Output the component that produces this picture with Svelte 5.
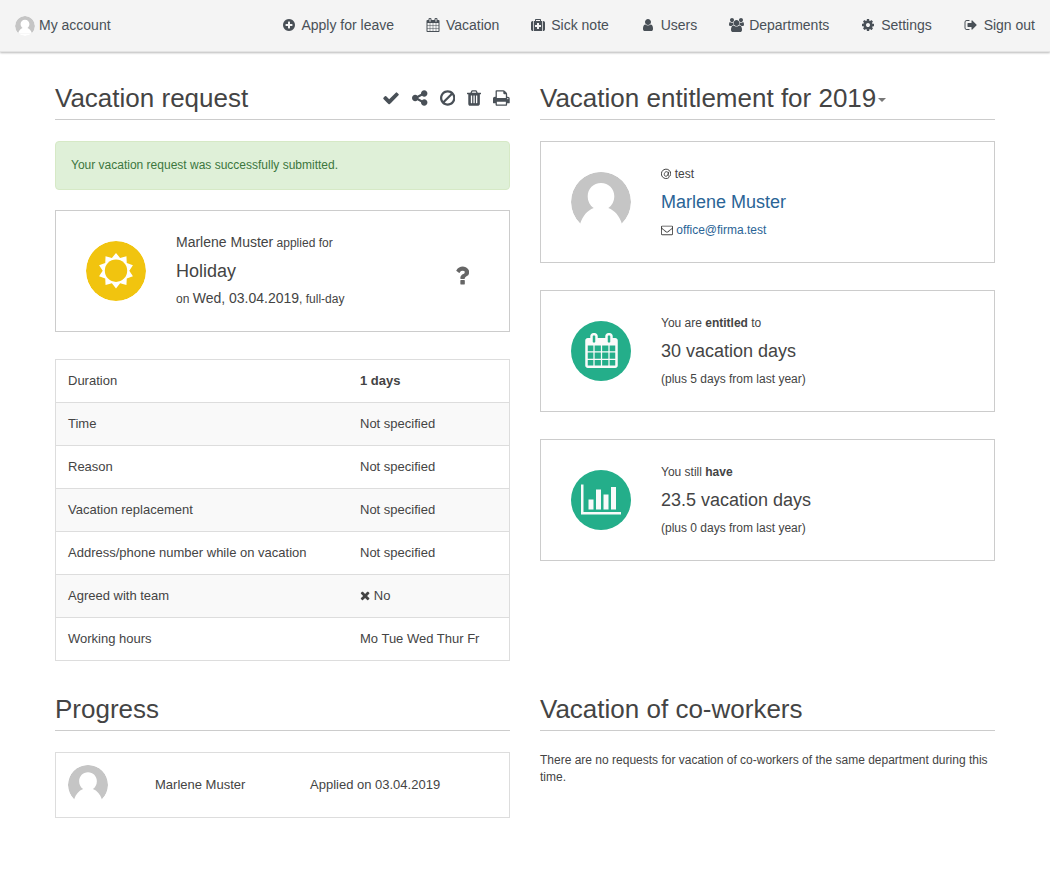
<script>
  const icons = {
    plus: ['0 0 1792 1792', 'M1344 960v-128q0-26-19-45t-45-19h-256v-256q0-26-19-45t-45-19h-128q-26 0-45 19t-19 45v256h-256q-26 0-45 19t-19 45v128q0 26 19 45t45 19h256v256q0 26 19 45t45 19h128q26 0 45-19t19-45v-256h256q26 0 45-19t19-45zm320-64q0 209-103 385.5t-279.5 279.5-385.5 103-385.5-103-279.5-279.5-103-385.5 103-385.5 279.5-279.5 385.5-103 385.5 103 279.5 279.5 103 385.5z'],
    calendar: ['0 0 1792 1792', 'M192 1664h288v-288h-288v288zm352 0h320v-288h-320v288zm-352-352h288v-320h-288v320zm352 0h320v-320h-320v320zm-352-384h288v-288h-288v288zm736 736h320v-288h-320v288zm-384-736h320v-288h-320v288zm768 736h288v-288h-288v288zm-384-352h320v-320h-320v320zm-352-864v-288q0-13-9.5-22.5t-22.5-9.5h-64q-13 0-22.5 9.5t-9.5 22.5v288q0 13 9.5 22.5t22.5 9.5h64q13 0 22.5-9.5t9.5-22.5zm736 864h288v-320h-288v320zm-384-384h320v-288h-320v288zm384 0h288v-288h-288v288zm32-480v-288q0-13-9.5-22.5t-22.5-9.5h-64q-13 0-22.5 9.5t-9.5 22.5v288q0 13 9.5 22.5t22.5 9.5h64q13 0 22.5-9.5t9.5-22.5zm384-64v1280q0 52-38 90t-90 38h-1408q-52 0-90-38t-38-90v-1280q0-52 38-90t90-38h128v-96q0-66 47-113t113-47h64q66 0 113 47t47 113v96h384v-96q0-66 47-113t113-47h64q66 0 113 47t47 113v96h128q52 0 90 38t38 90z'],
    medkit: ['0 0 1792 1792', 'M1280 1120v-192q0-14-9-23t-23-9h-224v-224q0-14-9-23t-23-9h-192q-14 0-23 9t-9 23v224h-224q-14 0-23 9t-9 23v192q0 14 9 23t23 9h224v224q0 14 9 23t23 9h192q14 0 23-9t9-23v-224h224q14 0 23-9t9-23zm-640-736h512v-128h-512v128zm-384 0v1280h-32q-92 0-158-66t-66-158v-832q0-92 66-158t158-66h32zm1184 0v1280h-1088v-1280h160v-160q0-40 28-68t68-28h576q40 0 68 28t28 68v160h160zm352 224v832q0 92-66 158t-158 66h-32v-1280h32q92 0 158 66t66 158z'],
    user: ['0 0 1792 1792', 'M1536 1399q0 109-62.5 187t-150.5 78h-854q-88 0-150.5-78t-62.5-187q0-85 8.5-160.5t31.5-152 58.5-131 94-89 134.5-34.5q131 128 313 128t313-128q76 0 134.5 34.5t94 89 58.5 131 31.5 152 8.5 160.5zm-256-887q0 159-112.5 271.5t-271.5 112.5-271.5-112.5-112.5-271.5 112.5-271.5 271.5-112.5 271.5 112.5 112.5 271.5z'],
    group: ['0 0 1920 1792', 'M593 896q-162 5-265 128h-134q-82 0-138-40.5t-56-118.5q0-353 124-353 6 0 43.5 21t97.5 42.5 119 21.5q67 0 133-23-5 37-5 66 0 139 81 256zm1071 637q0 120-73 189.5t-194 69.5h-874q-121 0-194-69.5t-73-189.5q0-53 3.5-103.5t14-109 26.5-108.5 43-97.5 62-81 85.5-53.5 111.5-20q10 0 43 21.5t73 48 107 48 135 21.5 135-21.5 107-48 73-48 43-21.5q61 0 111.5 20t85.5 53.5 62 81 43 97.5 26.5 108.5 14 109 3.5 103.5zm-1024-1277q0 106-75 181t-181 75-181-75-75-181 75-181 181-75 181 75 75 181zm704 384q0 159-112.5 271.5t-271.5 112.5-271.5-112.5-112.5-271.5 112.5-271.5 271.5-112.5 271.5 112.5 112.5 271.5zm576 225q0 78-56 118.5t-138 40.5h-134q-103-123-265-128 81-117 81-256 0-29-5-66 66 23 133 23 59 0 119-21.5t97.5-42.5 43.5-21q124 0 124 353zm-128-609q0 106-75 181t-181 75-181-75-75-181 75-181 181-75 181 75 75 181z'],
    cog: ['0 0 1792 1792', 'M1152 896q0-106-75-181t-181-75-181 75-75 181 75 181 181 75 181-75 75-181zm512-109v222q0 12-8 23t-20 13l-185 28q-19 54-39 91 35 50 107 138 10 12 10 25t-9 23q-27 37-99 108t-94 71q-12 0-26-9l-138-108q-44 23-91 38-16 136-29 186-7 28-36 28h-222q-14 0-24.5-8.5t-11.5-21.5l-28-184q-49-16-90-37l-141 107q-10 9-25 9-14 0-25-11-126-114-165-168-7-10-7-23 0-12 8-23 15-21 51-66.5t54-70.5q-27-50-41-99l-183-27q-13-2-21-12.5t-8-23.5v-222q0-12 8-23t19-13l186-28q14-46 39-92-40-57-107-138-10-12-10-24 0-10 9-23 26-36 98.5-107.5t94.5-71.5q13 0 26 10l138 107q44-23 91-38 16-136 29-186 7-28 36-28h222q14 0 24.5 8.5t11.5 21.5l28 184q49 16 90 37l142-107q9-9 24-9 13 0 25 10 129 119 165 170 7 8 7 22 0 12-8 23-15 21-51 66.5t-54 70.5q26 50 41 98l183 28q13 2 21 12.5t8 23.5z'],
    signout: ['0 0 1792 1792', 'M704 1440q0 4 1 20t.5 26.5-3 23.5-10 19.5-20.5 6.5h-320q-119 0-203.5-84.5t-84.5-203.5v-704q0-119 84.5-203.5t203.5-84.5h320q13 0 22.5 9.5t9.5 22.5q0 4 1 20t.5 26.5-3 23.5-10 19.5-20.5 6.5h-320q-66 0-113 47t-47 113v704q0 66 47 113t113 47h312l11.5 1 11.5 3 8 5.5 7 9 2 13.5zm928-544q0 26-19 45l-544 544q-19 19-45 19t-45-19-19-45v-288h-448q-26 0-45-19t-19-45v-384q0-26 19-45t45-19h448v-288q0-26 19-45t45-19 45 19l544 544q19 19 19 45z'],
    check: ['0 0 1792 1792', 'M1671 566q0 40-28 68l-724 724-136 136q-28 28-68 28t-68-28l-136-136-362-362q-28-28-28-68t28-68l136-136q28-28 68-28t68 28l294 295 656-657q28-28 68-28t68 28l136 136q28 28 28 68z'],
    share: ['128 0 1536 1792', 'M1344 1024q133 0 226.5 93.5t93.5 226.5-93.5 226.5-226.5 93.5-226.5-93.5-93.5-226.5q0-12 2-34l-360-180q-92 86-218 86-133 0-226.5-93.5t-93.5-226.5 93.5-226.5 226.5-93.5q126 0 218 86l360-180q-2-22-2-34 0-133 93.5-226.5t226.5-93.5 226.5 93.5 93.5 226.5-93.5 226.5-226.5 93.5q-126 0-218-86l-360 180q2 22 2 34t-2 34l360 180q92-86 218-86z'],
    ban: ['128 0 1536 1792', 'M1440 893q0-161-87-295l-754 753q137 89 297 89 111 0 211.5-43.5t173.5-116.5 116-174.5 43-212.5zm-999 299l755-754q-135-91-300-91-148 0-273 73t-198 199-73 274q0 162 89 299zm1223-299q0 157-61 300t-163.5 246-245 164-298.5 61-298.5-61-245-164-163.5-246-61-300 61-299.5 163.5-245.5 245-164 298.5-61 298.5 61 245 164 163.5 245.5 61 299.5z'],
    trash: ['192 0 1408 1792', 'M704 1376v-704q0-14-9-23t-23-9h-64q-14 0-23 9t-9 23v704q0 14 9 23t23 9h64q14 0 23-9t9-23zm256 0v-704q0-14-9-23t-23-9h-64q-14 0-23 9t-9 23v704q0 14 9 23t23 9h64q14 0 23-9t9-23zm256 0v-704q0-14-9-23t-23-9h-64q-14 0-23 9t-9 23v704q0 14 9 23t23 9h64q14 0 23-9t9-23zm-544-992h448l-48-117q-7-9-17-11h-317q-10 2-17 11zm928 32v64q0 14-9 23t-23 9h-96v948q0 83-47 143.5t-113 60.5h-832q-66 0-113-58.5t-47-141.5v-952h-96q-14 0-23-9t-9-23v-64q0-14 9-23t23-9h309l70-167q15-37 54-63t79-26h320q40 0 79 26t54 63l70 167h309q14 0 23 9t9 23z'],
    print: ['64 0 1664 1792', 'M448 1536h896v-256h-896v256zm0-640h896v-384h-160q-40 0-68-28t-28-68v-160h-640v640zm1152 64q0-26-19-45t-45-19-45 19-19 45 19 45 45 19 45-19 19-45zm128 0v416q0 13-9.5 22.5t-22.5 9.5h-224v160q0 40-28 68t-68 28h-960q-40 0-68-28t-28-68v-160h-224q-13 0-22.5-9.5t-9.5-22.5v-416q0-79 56.5-135.5t135.5-56.5h64v-544q0-40 28-68t68-28h672q40 0 88 20t76 48l152 152q28 28 48 76t20 88v256h64q79 0 135.5 56.5t56.5 135.5z'],
    question: ['384 0 1024 1792', 'M1088 1256v240q0 16-12 28t-28 12h-240q-16 0-28-12t-12-28v-240q0-16 12-28t28-12h240q16 0 28 12t12 28zm316-600q0 54-15.5 101t-35 76.5-55 59.5-57.5 43.5-61 35.5q-41 23-68.5 65t-27.5 67q0 17-12 32.5t-28 15.5h-240q-15 0-25.5-18.5t-10.5-37.5v-45q0-83 65-156.5t143-108.5q59-27 84-56t25-76q0-42-46.5-74t-107.5-32q-65 0-108 29-35 25-107 115-13 16-31 16-12 0-25-8l-164-125q-13-10-15.5-25t5.5-28q160-266 464-266 80 0 161 31t146 83 106 127.5 41 158.5z'],
    envelope: ['0 0 1792 1792', 'M1664 1504v-768q-32 36-69 66-268 206-426 338-51 43-83 67t-86.5 48.5-102.5 24.5h-2q-48 0-102.5-24.5t-86.5-48.5-83-67q-158-132-426-338-37-30-69-66v768q0 13 9.5 22.5t22.5 9.5h1472q13 0 22.5-9.5t9.5-22.5zm0-1051v-24.5l-.5-13-3-12.5-5.5-9-9-7.5-14-2.5h-1472q-13 0-22.5 9.5t-9.5 22.5q0 168 147 284 193 152 401 317 6 5 35 29.5t46 37.5 44.5 31.5 50.5 27.5 43 9h2q20 0 43-9t50.5-27.5 44.5-31.5 46-37.5 35-29.5q208-165 401-317 54-43 100.5-115.5t46.5-131.5zm128-37v1088q0 66-47 113t-113 47h-1472q-66 0-113-47t-47-113v-1088q0-66 47-113t113-47h1472q66 0 113 47t47 113z'],
    times: ['192 0 1408 1792', 'M1490 1322q0 40-28 68l-136 136q-28 28-68 28t-68-28l-294-294-294 294q-28 28-68 28t-68-28l-136-136q-28-28-28-68t28-68l294-294-294-294q-28-28-28-68t28-68l136-136q28-28 68-28t68 28l294 294 294-294q28-28 68-28t68 28l136 136q28 28 28 68t-28 68l-294 294 294 294q28 28 28 68z'],
    chart: ['0 0 2048 1792', 'M640 896v512h-256v-512h256zm384-512v1024h-256v-1024h256zm1024 1152v128h-2048v-1536h128v1408h1920zm-640-896v768h-256v-768h256zm384-384v1152h-256v-1152h256z']
  };

  const nav = [
    ['plus', 'Apply for leave'],
    ['calendar', 'Vacation'],
    ['medkit', 'Sick note'],
    ['user', 'Users'],
    ['group', 'Departments'],
    ['cog', 'Settings'],
    ['signout', 'Sign out']
  ];
  const actions = ['check', 'share', 'ban', 'trash', 'print'];
  const details = [
    ['Duration', '1 days'],
    ['Time', 'Not specified'],
    ['Reason', 'Not specified'],
    ['Vacation replacement', 'Not specified'],
    ['Address/phone number while on vacation', 'Not specified'],
    ['Agreed with team', 'No'],
    ['Working hours', 'Mo Tue Wed Thur Fr']
  ];

  // Ten-pointed outline of the sun, alternating tip and valley
  const sun = Array.from({ length: 20 }, (_, i) => {
    const r = i % 2 ? 13.3 : 17.8;
    const a = (i * Math.PI) / 10;
    return `${(30 + r * Math.sin(a)).toFixed(2)},${(29.7 - r * Math.cos(a)).toFixed(2)}`;
  }).join(' ');
</script>

{#snippet icon(name, size)}
  {@const box = icons[name][0].split(' ')}
  <svg class="icon" viewBox={icons[name][0]} width={(box[2] / 1792) * size} height={size} aria-hidden="true"><path d={icons[name][1]} /></svg>
{/snippet}

{#snippet avatar(size)}
  <svg class="avatar" viewBox="0 0 60 60" width={size} height={size} aria-hidden="true">
    <circle cx="30" cy="30" r="30" fill="#fff" />
    <path fill="#c5c5c5" d="M9.200 51.500A30 30 0 1 1 50.800 51.500z" />
    <path fill="#fff" d="M30 10.900c7.500 0 13.300 5.900 13.300 13.300 0 5.100-2.400 9.300-6 11.900 6.500 2.500 11 8 13.500 15.400v1H9.200v-1c2.500-7.400 7-12.900 13.500-15.400-3.600-2.600-6-6.800-6-11.900 0-7.400 5.800-13.300 13.300-13.300z" />
  </svg>
{/snippet}

<nav class="navbar">
  <a class="account" href="#account">{@render avatar(20)}<span>My account</span></a>
  <div class="links">
    {#each nav as [name, label]}
      <a href="#{name}"><span class="fw">{@render icon(name, 14)}</span>{label}</a>
    {/each}
  </div>
</nav>

<main>
  <div class="row first">
    <section>
      <header>
        <h2>Vacation request</h2>
        <div class="actions">
          {#each actions as name}{@render icon(name, 18)}{/each}
        </div>
      </header>
      <div class="alert">Your vacation request was successfully submitted.</div>
      <div class="box">
        <svg class="round" viewBox="0 0 60 60" width="60" height="60" aria-hidden="true">
          <circle cx="30" cy="30" r="30" fill="#f1c40f" />
          <polygon points={sun} fill="#fff" />
          <circle cx="30" cy="29.700" r="11.200" fill="#f1c40f" />
        </svg>
        <div class="lines request">
          <p><span class="mid">Marlene Muster</span> applied for</p>
          <h3>Holiday</h3>
          <p>on <span class="mid">Wed, 03.04.2019</span>, full-day</p>
        </div>
        <span class="status">{@render icon('question', 25)}</span>
      </div>
      <div class="table">
        {#each details as [label, value], i}
          <div class="tr">
            <span>{label}</span>
            <span class:bold={i === 0}>{#if value === 'No'}{@render icon('times', 13)}&nbsp;{/if}{value}</span>
          </div>
        {/each}
      </div>
    </section>

    <section>
      <header><h2>Vacation entitlement for 2019</h2><i class="caret"></i></header>
      <div class="box">
        {@render avatar(60)}
        <div class="lines">
          <p>
            <svg class="icon at" viewBox="0 0 12 12" width="10.300" height="12" aria-hidden="true">
              <path fill="none" stroke="currentColor" stroke-width="1.150" d="M9.600 9.900A5.500 5.500 0 1 1 11.400 6.100c0 1.600-.9 2.500-1.900 2.500-1.100 0-1.400-.7-1.200-1.600l.8-3.600M8.400 5.600c-.3 1.800-1.400 3-2.700 3-1.200 0-1.900-.8-1.900-2.100 0-1.800 1.200-3.200 2.600-3.200 1.200 0 2.200.9 2 2.300z" />
            </svg>
            test
          </p>
          <h3 class="link">Marlene Muster</h3>
          <p>{@render icon('envelope', 12)} <span class="link">office@firma.test</span></p>
        </div>
      </div>
      <div class="box">
        <span class="round green">{@render icon('calendar', 35)}</span>
        <div class="lines">
          <p>You are <b>entitled</b> to</p>
          <h3>30 vacation days</h3>
          <p>(plus 5 days from last year)</p>
        </div>
      </div>
      <div class="box">
        <span class="round green">{@render icon('chart', 35)}</span>
        <div class="lines">
          <p>You still <b>have</b></p>
          <h3>23.5 vacation days</h3>
          <p>(plus 0 days from last year)</p>
        </div>
      </div>
    </section>
  </div>

  <div class="row">
    <section>
      <header><h2>Progress</h2></header>
      <div class="progress">
        {@render avatar(40)}
        <span>Marlene Muster</span>
        <span>Applied on 03.04.2019</span>
      </div>
    </section>
    <section>
      <header><h2>Vacation of co-workers</h2></header>
      <p class="note">There are no requests for vacation of co-workers of the same department during this time.</p>
    </section>
  </div>
</main>

<style>
  :global(body) {
    margin: 0;
    background: #fff;
    color: #444;
    font: 12px/17px "Liberation Sans", Arial, sans-serif;
  }
  * { box-sizing: border-box; }
  h2, h3, p { margin: 0; font-weight: 400; }
  .icon { fill: currentColor; flex: none; }
  .avatar, .round { display: block; flex: none; border-radius: 50%; }
  .navbar {
    display: flex;
    justify-content: space-between;
    height: 52px;
    padding: 0 15px;
    background: #f4f4f4;
    border-bottom: 1px solid #e4e4e4;
    box-shadow: 0 1px 2px rgba(0, 0, 0, .28);
    font-size: 14px;
    line-height: 50px;
  }
  .navbar a { display: flex; color: #495057; text-decoration: none; white-space: nowrap; }
  .account { align-items: center; gap: 4px; }
  .account .avatar { margin-top: 1px; }
  .account span { height: 51px; }
  .links { display: flex; gap: 30px; }
  .fw { display: flex; justify-content: center; align-items: center; width: 18px; height: 50px; margin-right: 3.89px; }
  main { width: 940px; margin: 0 auto; }
  .row { display: grid; grid-template-columns: 455px 455px; column-gap: 30px; }
  .first { padding-top: 25px; min-height: 636px; }
  header {
    display: flex;
    align-items: center;
    height: 43px;
    margin-bottom: 21px;
    border-bottom: 1px solid #ccc;
  }
  h2 { font-size: 26px; line-height: 42px; }
  .actions { display: flex; align-items: center; gap: 12px; margin: 0 0 1px auto; color: #495057; }
  .caret { margin: 4px 0 0 2px; border: 4px solid transparent; border-top-color: #777; border-bottom: 0; }
  .alert {
    height: 49px;
    margin-bottom: 20px;
    padding: 15px;
    border: 1px solid #d6e9c6;
    border-radius: 4px;
    background: #dff0d8;
    color: #3c763d;
  }
  .box {
    display: flex;
    align-items: center;
    height: 122px;
    margin-bottom: 27px;
    padding: 0 30px;
    border: 1px solid #ccc;
  }
  .lines { margin-left: 30px; line-height: 28px; white-space: nowrap; }
  .lines p { height: 28px; }
  .request p { line-height: 26px; }
  .lines .icon { vertical-align: -2px; }
  h3 { height: 28px; font-size: 18px; line-height: 28px; }
  .mid { font-size: 14px; }
  .link { color: #2a6496; }
  .status { display: flex; margin: 8px 10px 0 auto; color: #666; }
  .green { display: flex; align-items: center; justify-content: center; width: 60px; height: 60px; padding-bottom: 1px; background: #24ae8a; color: #fafafa; }
  .table { border: 1px solid #ddd; font-size: 13px; }
  .tr { display: grid; grid-template-columns: 292px 1fr; height: 43px; padding-left: 12px; line-height: 41px; border-bottom: 1px solid #ddd; }
  .tr:nth-child(even) { background: #f9f9f9; }
  .tr:last-child { height: 42px; border-bottom: 0; }
  .tr .icon { vertical-align: -2px; }
  .bold { font-weight: 700; }
  .progress {
    display: grid;
    grid-template-columns: 87px 155px 1fr;
    align-items: center;
    height: 66px;
    padding-left: 12px;
    border: 1px solid #ddd;
    font-size: 13px;
  }
  .progress span { padding-bottom: 2px; }
</style>
